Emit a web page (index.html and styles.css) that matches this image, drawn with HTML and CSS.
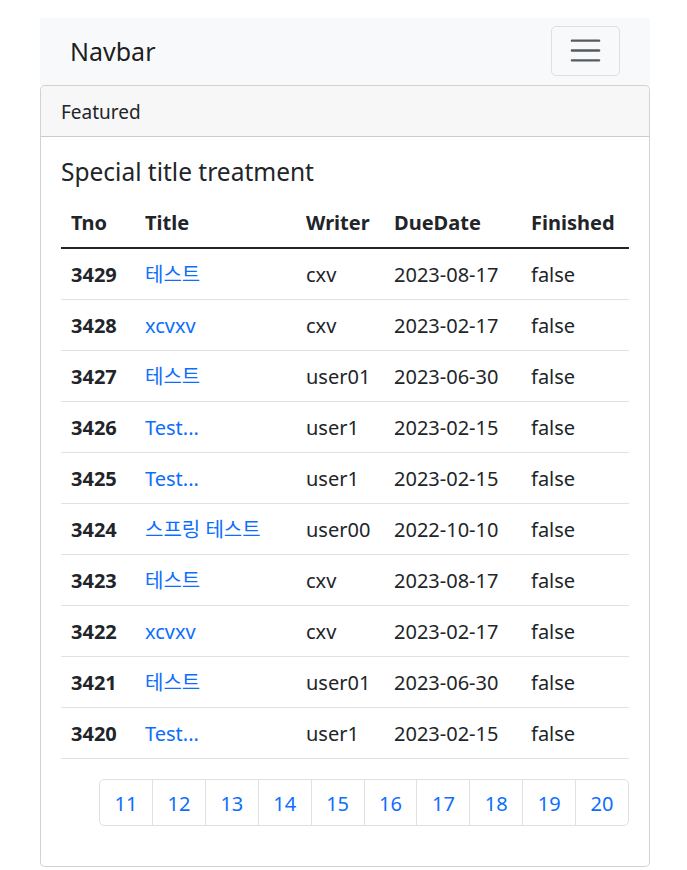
FILE: index.html
```html
<!DOCTYPE html>
<html lang="ko">
<head>
    <meta charset="UTF-8">
    <meta name="viewport" content="width=device-width, initial-scale=1.0">
    <title>Todo List</title>
    <link rel="stylesheet" href="styles.css">
</head>
<body>

    <div class="page">
        <nav class="navbar">
            <a class="navbar-brand" href="#">Navbar</a>
            <button class="navbar-toggler" type="button" aria-label="Toggle navigation">
                <svg class="toggler-icon" viewBox="0 0 30 30" xmlns="http://www.w3.org/2000/svg">
                    <path d="M4 7h22M4 15h22M4 23h22" stroke="rgba(33,37,41,0.75)" stroke-width="2" stroke-linecap="round" fill="none"/>
                </svg>
            </button>
        </nav>

        <div class="card">
            <div class="card-header">Featured</div>
            <div class="card-body">
                <h5 class="card-title">Special title treatment</h5>

                <table class="table">
                    <thead>
                        <tr>
                            <th class="col-tno">Tno</th>
                            <th class="col-title">Title</th>
                            <th class="col-writer">Writer</th>
                            <th class="col-date">DueDate</th>
                            <th class="col-fin">Finished</th>
                        </tr>
                    </thead>
                    <tbody>
                        <tr><th>3429</th><td><a href="#">테스트</a></td><td>cxv</td><td>2023-08-17</td><td>false</td></tr>
                        <tr><th>3428</th><td><a href="#">xcvxv</a></td><td>cxv</td><td>2023-02-17</td><td>false</td></tr>
                        <tr><th>3427</th><td><a href="#">테스트</a></td><td>user01</td><td>2023-06-30</td><td>false</td></tr>
                        <tr><th>3426</th><td><a href="#">Test...</a></td><td>user1</td><td>2023-02-15</td><td>false</td></tr>
                        <tr><th>3425</th><td><a href="#">Test...</a></td><td>user1</td><td>2023-02-15</td><td>false</td></tr>
                        <tr><th>3424</th><td><a href="#">스프링 테스트</a></td><td>user00</td><td>2022-10-10</td><td>false</td></tr>
                        <tr><th>3423</th><td><a href="#">테스트</a></td><td>cxv</td><td>2023-08-17</td><td>false</td></tr>
                        <tr><th>3422</th><td><a href="#">xcvxv</a></td><td>cxv</td><td>2023-02-17</td><td>false</td></tr>
                        <tr><th>3421</th><td><a href="#">테스트</a></td><td>user01</td><td>2023-06-30</td><td>false</td></tr>
                        <tr><th>3420</th><td><a href="#">Test...</a></td><td>user1</td><td>2023-02-15</td><td>false</td></tr>
                    </tbody>
                </table>

                <ul class="pagination">
                    <li class="page-item"><a class="page-link" href="#">11</a></li>
                    <li class="page-item"><a class="page-link" href="#">12</a></li>
                    <li class="page-item"><a class="page-link" href="#">13</a></li>
                    <li class="page-item"><a class="page-link" href="#">14</a></li>
                    <li class="page-item"><a class="page-link" href="#">15</a></li>
                    <li class="page-item"><a class="page-link" href="#">16</a></li>
                    <li class="page-item"><a class="page-link" href="#">17</a></li>
                    <li class="page-item"><a class="page-link" href="#">18</a></li>
                    <li class="page-item"><a class="page-link" href="#">19</a></li>
                    <li class="page-item"><a class="page-link" href="#">20</a></li>
                </ul>
            </div>
        </div>
    </div>

</body>
</html>
```

FILE: styles.css
```css
body {
    margin: 0;
    padding: 0;
    background-color: #fff;
    color: #212529;
    font-family: "Noto Sans", "Noto Sans CJK KR", sans-serif;
    font-size: 20px;
    line-height: 30px;
}

.page {
    width: 610px;
    margin: 18px 0 0 40px;
}

/* navbar */
.navbar {
    display: flex;
    align-items: center;
    justify-content: space-between;
    height: 68px;
    padding: 0 30px;
    box-sizing: border-box;
    background-color: #f8f9fa;
}

.navbar-brand {
    font-size: 25px;
    line-height: 30px;
    color: rgba(0, 0, 0, 0.9);
    text-decoration: none;
    margin-top: -3px;
}

.navbar-toggler {
    display: flex;
    align-items: center;
    justify-content: center;
    width: 69px;
    height: 50px;
    margin-top: -3px;
    padding: 0;
    background: transparent;
    border: 1px solid rgba(0, 0, 0, 0.1);
    border-radius: 5px;
    cursor: pointer;
}

.toggler-icon {
    width: 37px;
    height: 37px;
}

/* card */
.card {
    border: 1px solid rgba(0, 0, 0, 0.175);
    border-radius: 5px;
    background-color: #fff;
    margin-top: -1px;
}

.card-header {
    padding: 11px 20px 9px;
    background-color: #f7f7f7;
    border-bottom: 1px solid rgba(0, 0, 0, 0.175);
    border-radius: 5px 5px 0 0;
    font-size: 19px;
}

.card-body {
    padding: 20px;
}

.card-title {
    margin: 0 0 10px;
    font-size: 24.5px;
    font-weight: 400;
    line-height: 30px;
}

/* table */
.table {
    width: 100%;
    border-collapse: collapse;
    margin-bottom: 20px;
}

.table th,
.table td {
    padding: 11px 10px 9px;
    text-align: left;
    vertical-align: top;
    border-bottom: 1px solid #dee2e6;
    white-space: nowrap;
}

.table th {
    font-weight: 700;
}

.table thead th {
    border-bottom: 2px solid #212529;
}

.col-tno { width: 54px; }
.col-title { width: 141px; }
.col-writer { width: 68px; }
.col-date { width: 117px; }

.table a {
    color: #0d6efd;
    text-decoration: none;
}

/* pagination */
.pagination {
    display: flex;
    justify-content: flex-end;
    list-style: none;
    margin: 0 0 20px;
    padding: 0;
}

.page-link {
    display: block;
    width: 53.9px;
    box-sizing: border-box;
    padding: 8.5px 0 6.5px;
    text-align: center;
    color: #0d6efd;
    text-decoration: none;
    border: 1px solid #dee2e6;
    margin-left: -1px;
    background-color: #fff;
}

.page-item:first-child .page-link {
    border-radius: 5px 0 0 5px;
}

.page-item:last-child .page-link {
    border-radius: 0 5px 5px 0;
}
```
